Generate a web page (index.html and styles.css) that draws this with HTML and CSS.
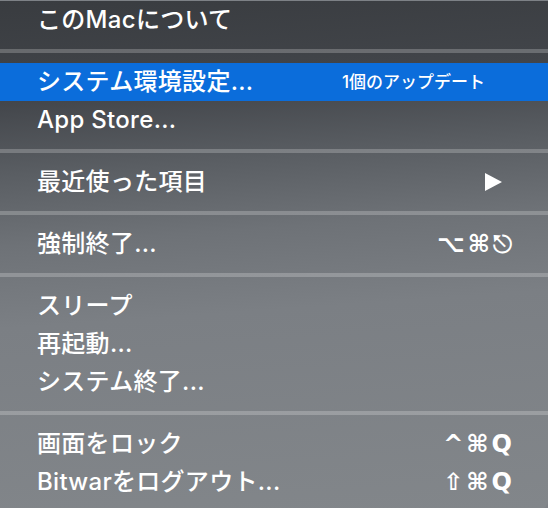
FILE: index.html
```html
<!DOCTYPE html>
<html lang="ja">
<head>
    <meta charset="UTF-8">
    <meta name="viewport" content="width=device-width, initial-scale=1.0">
    <title>Apple menu</title>
    <link rel="stylesheet" href="styles.css">
</head>
<body>
    <div class="menu">
        <div class="item first"><span class="label">このMacについて</span></div>
        <div class="sep"></div>
        <div class="item active">
            <span class="label">システム環境設定...</span>
            <span class="badge">1個のアップデート</span>
        </div>
        <div class="item"><span class="label">App Store...</span></div>
        <div class="sep"></div>
        <div class="item">
            <span class="label">最近使った項目</span>
            <span class="arrow"></span>
        </div>
        <div class="sep"></div>
        <div class="item">
            <span class="label">強制終了...</span>
            <span class="keys">⌥⌘⎋</span>
        </div>
        <div class="sep"></div>
        <div class="item"><span class="label">スリープ</span></div>
        <div class="item"><span class="label">再起動...</span></div>
        <div class="item"><span class="label">システム終了...</span></div>
        <div class="sep"></div>
        <div class="item">
            <span class="label">画面をロック</span>
            <span class="keys">^⌘Q</span>
        </div>
        <div class="item">
            <span class="label">Bitwarをログアウト...</span>
            <span class="keys">⇧⌘Q</span>
        </div>
    </div>
</body>
</html>
```

FILE: styles.css
```css
/* Styles généraux */
body {
    margin: 0;
    width: 548px;
    height: 508px;
    overflow: hidden;
    background-color: #7d8186;
    font-family: Inter, "Noto Sans CJK JP", sans-serif;
    color: #ffffff;
}

/* Menu */
.menu {
    height: 508px;
    background: linear-gradient(176deg, #393c40 0%, #42454a 18%, #5a5e63 32%, #6e7277 45%, #7b7f84 60%, #82868a 100%);
    border-bottom-right-radius: 8px;
}

.item {
    height: 38px;
    display: flex;
    align-items: center;
    justify-content: space-between;
    padding: 0 38px 0 37px;
    font-size: 24px;
    font-weight: 500;
    line-height: 1;
}
.item.first {
    margin-top: 1px;
}
.item.active {
    background-color: #0b6ddb;
}

.label {
    white-space: nowrap;
    letter-spacing: 0.3px;
}

/* Texte à droite */
.badge {
    font-size: 17px;
    margin-right: 25px;
}
.arrow {
    width: 0;
    height: 0;
    border-top: 9px solid transparent;
    border-bottom: 9px solid transparent;
    border-left: 17px solid #ffffff;
    margin-right: 8px;
}
.keys {
    font-family: "DejaVu Sans", sans-serif;
    font-size: 24px;
    font-weight: bold;
    letter-spacing: 3px;
    margin-right: -5px;
}

/* Séparateurs */
.sep {
    height: 4px;
    margin: 10px 0;
    background-color: rgba(255, 255, 255, 0.22);
}
```
